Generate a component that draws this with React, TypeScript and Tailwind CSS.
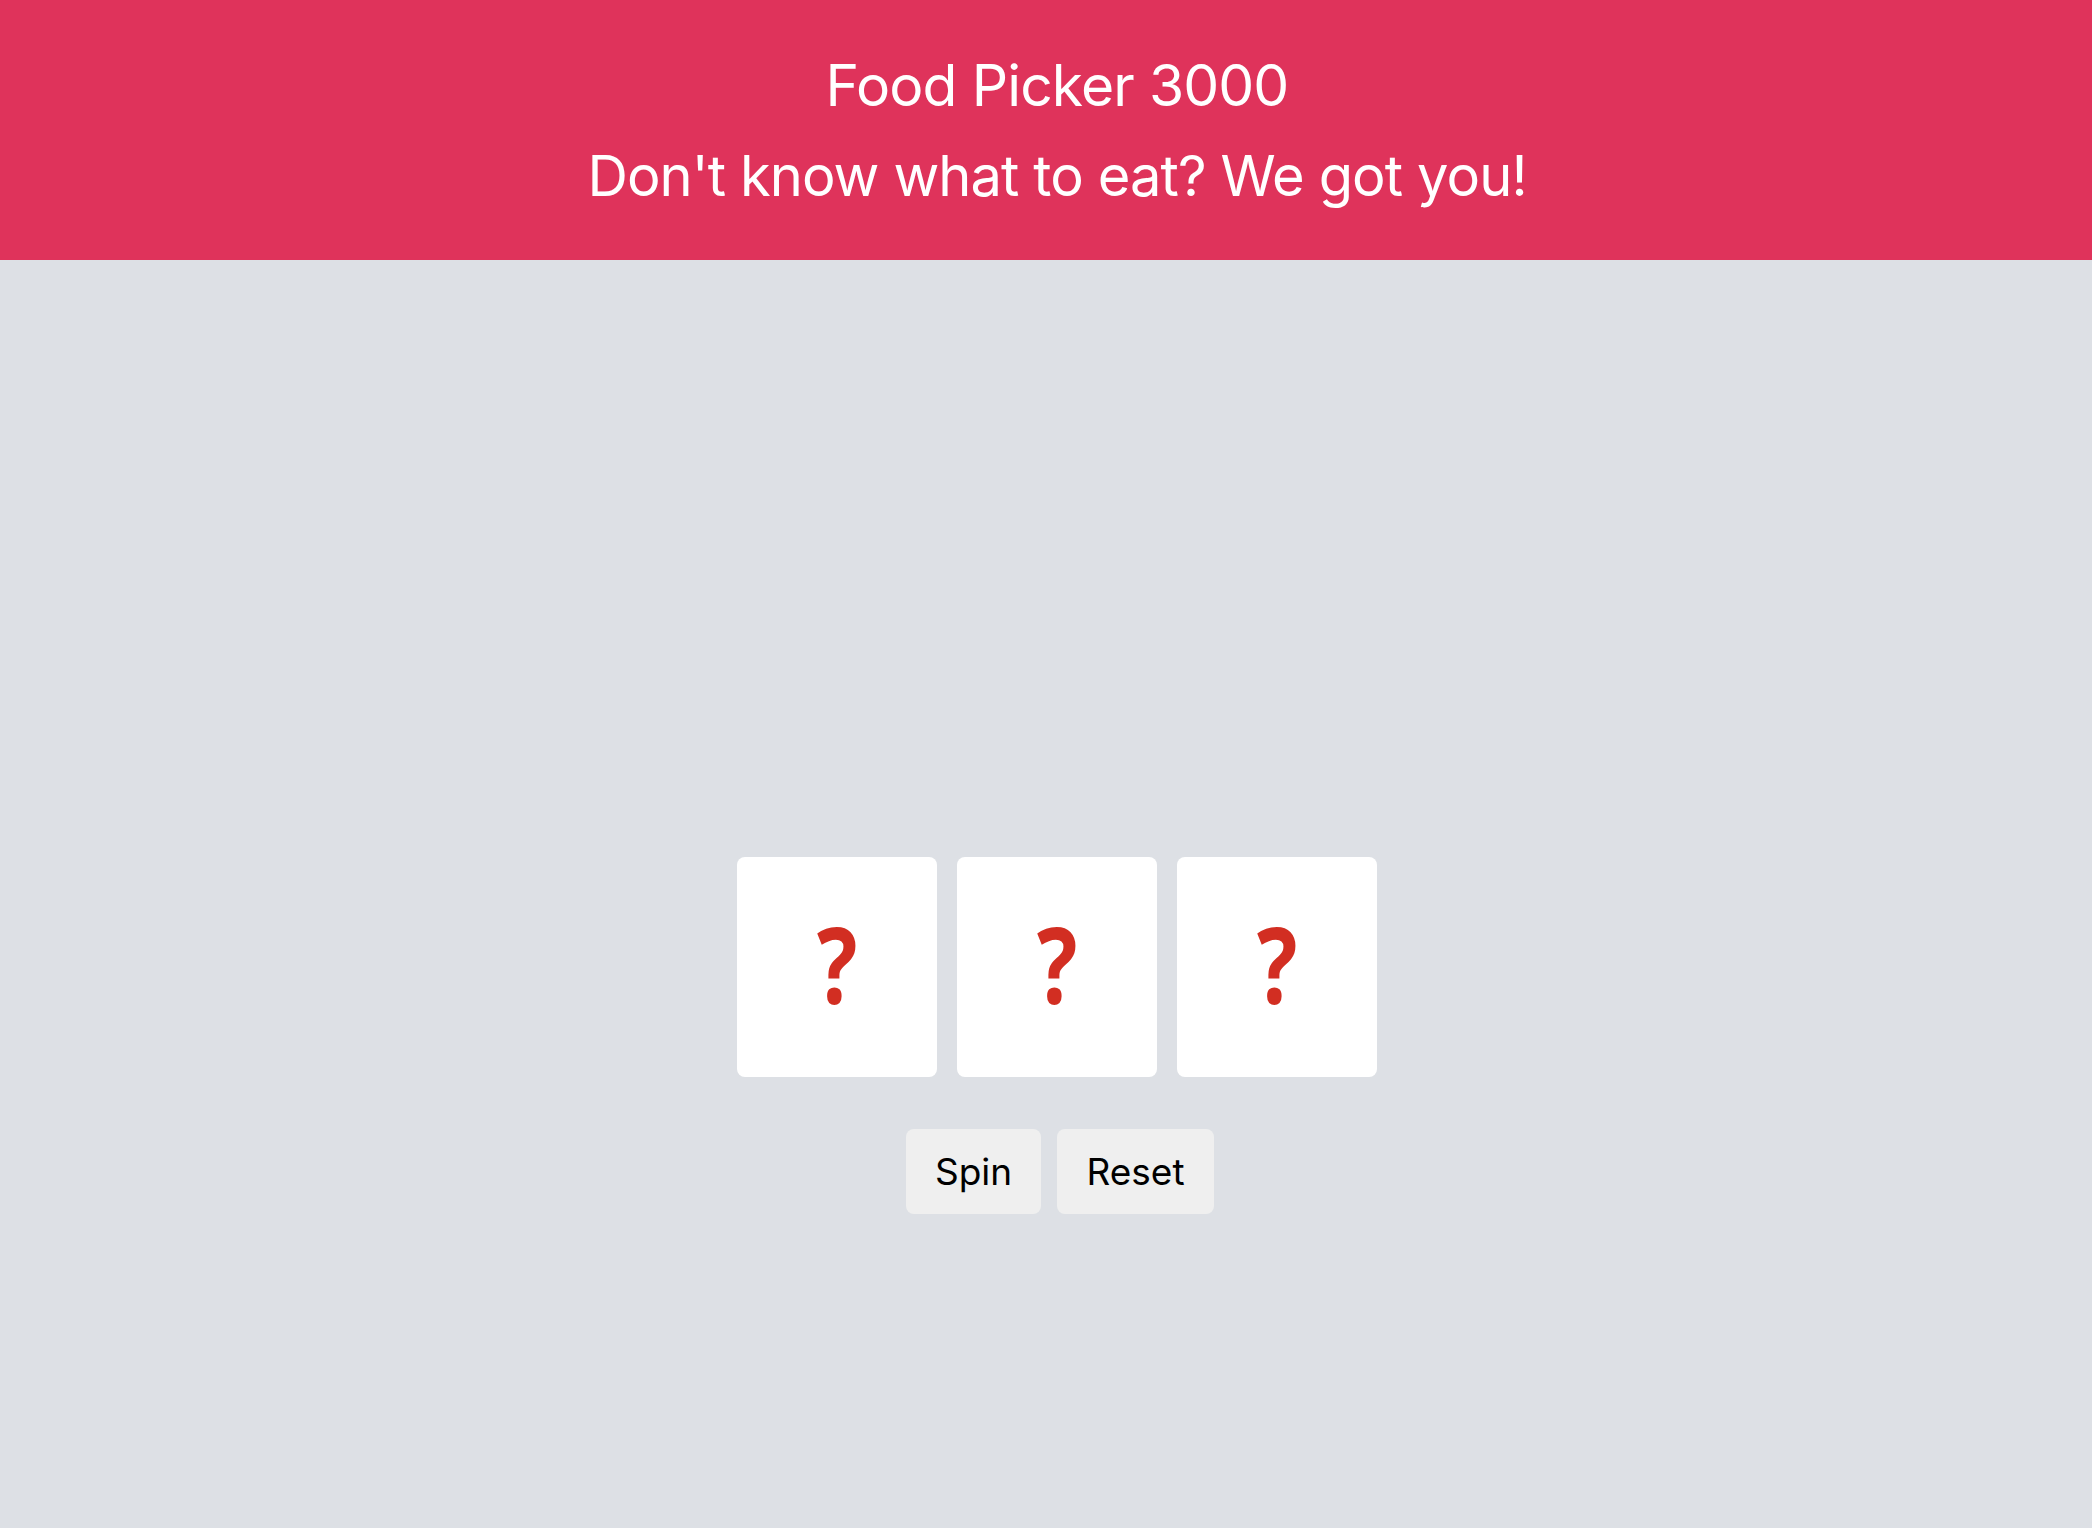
const slots = ["?", "?", "?"];

export default function App() {
  return (
    <div className="min-h-screen bg-[#dde0e5] font-['Inter','Liberation_Sans',sans-serif] pl-[22px]">
      {/* header */}
      <header className="-ml-[22px] pl-[22px] h-[260px] bg-[#df335b] text-white flex flex-col items-center pt-[52px]">
        <h1 className="text-[57px] leading-[68px] font-normal tracking-[-0.9px]">
          Food Picker 3000
        </h1>
        <h2 className="mt-[22px] text-[56px] leading-[68px] font-normal tracking-[-0.9px]">
          Don't know what to eat? We got you!
        </h2>
      </header>

      {/* slots */}
      <main className="flex flex-col items-center pt-[597px]">
        <div className="flex gap-[20px]">
          {slots.map((s, i) => (
            <div
              key={i}
              className="w-[200px] h-[220px] bg-white rounded-[8px] flex items-center justify-center"
            >
              <span className="inline-block mb-[8px] scale-x-[0.8] font-['Open_Sans',sans-serif] font-bold text-[106px] leading-none text-[#d22e22]">
                {s}
              </span>
            </div>
          ))}
        </div>

        <div className="flex gap-[16px] mt-[52px] ml-[6px]">
          <button className="h-[85px] w-[135px] bg-[#efefef] rounded-[8px] text-[37px] text-black">
            Spin
          </button>
          <button className="h-[85px] w-[157px] bg-[#efefef] rounded-[8px] text-[37px] text-black">
            Reset
          </button>
        </div>
      </main>
    </div>
  );
}
